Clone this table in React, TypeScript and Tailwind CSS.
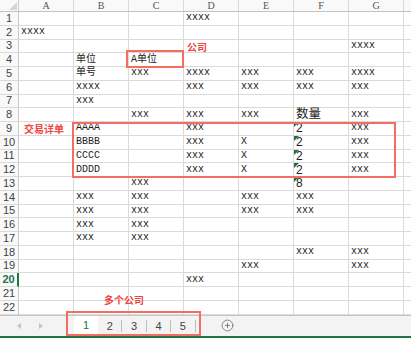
import { CirclePlus } from "lucide-react";

const cols = ["A", "B", "C", "D", "E", "F", "G"];

// row -> { colIndex: text }
const data: Record<number, Record<number, string>> = {
  1: { 3: "xxxx" },
  2: { 0: "xxxx" },
  3: { 6: "xxxx" },
  4: { 1: "单位", 2: "A单位" },
  5: { 1: "单号", 2: "xxx", 3: "xxxx", 4: "xxx", 5: "xxx", 6: "xxxx" },
  6: { 1: "xxxx", 3: "xxx", 4: "xxx", 5: "xxx", 6: "xxx" },
  7: { 1: "xxx" },
  8: { 2: "xxx", 3: "xxx", 4: "xxx", 5: "数量", 6: "xxx" },
  9: { 1: "AAAA", 3: "xxx", 5: "2", 6: "xxx" },
  10: { 1: "BBBB", 3: "xxx", 4: "X", 5: "2", 6: "xxx" },
  11: { 1: "CCCC", 3: "xxx", 4: "X", 5: "2", 6: "xxx" },
  12: { 1: "DDDD", 3: "xxx", 4: "X", 5: "2", 6: "xxx" },
  13: { 2: "xxx", 5: "8" },
  14: { 1: "xxx", 2: "xxx", 4: "xxx", 5: "xxx" },
  15: { 1: "xxx", 2: "xxx", 4: "xxx", 5: "xxx" },
  16: { 1: "xxx", 2: "xxx" },
  17: { 1: "xxx", 2: "xxx" },
  18: { 5: "xxx", 6: "xxx" },
  19: { 4: "xxx", 6: "xxx" },
  20: { 3: "xxx" },
};

const rows = Array.from({ length: 22 }, (_, i) => i + 1);
const numberCells = ["2", "8"];

function Cell({ text }: { text?: string }) {
  const isNum = text !== undefined && numberCells.includes(text);
  const isBig = text === "数量";
  return (
    <div className="relative flex items-center overflow-visible border-r border-b border-[#dadada] pl-[2px] whitespace-nowrap">
      {isNum && (
        <span className="absolute left-0 top-0 h-0 w-0 border-t-[5px] border-r-[5px] border-t-[#1e7145] border-r-transparent" />
      )}
      {text && (
        <span
          className={
            isNum
              ? "font-['Liberation_Sans',sans-serif] text-[12px] leading-none text-[#222]"
              : isBig
              ? "-mt-[2px] font-['Noto_Sans_CJK_SC',sans-serif] text-[12.5px] leading-none text-[#222]"
              : "font-['Liberation_Mono','Noto_Sans_CJK_SC',monospace] text-[10px] leading-none text-[#222]"
          }
        >
          {text}
        </span>
      )}
    </div>
  );
}

export default function App() {
  return (
    <div className="relative h-[338px] w-[411px] overflow-hidden bg-white">
      {/* column headers */}
      <div className="grid h-[12px] grid-cols-[19px_repeat(7,55px)_1fr] border-b border-[#c2c2c2] bg-[#f9f9f9]">
        <div className="relative border-r border-[#c8c8c8]">
          <span className="absolute bottom-[1px] right-[1px] h-0 w-0 border-b-[8px] border-l-[8px] border-b-[#d6d6d6] border-l-transparent" />
        </div>
        {cols.map((c) => (
          <div
            key={c}
            className="flex items-center justify-center border-r border-[#dadada] font-['Liberation_Serif',serif] text-[10px] leading-none text-[#555]"
          >
            {c}
          </div>
        ))}
        <div />
      </div>

      {/* rows */}
      {rows.map((r) => (
        <div key={r} className="grid h-[13.75px] grid-cols-[19px_repeat(7,55px)_1fr]">
          <div
            className={
              r === 20
                ? "flex items-center justify-center border-r-2 border-b border-r-[#217346] border-b-[#dadada] bg-[#f9f9f9] font-['Liberation_Sans',sans-serif] text-[11px] font-bold leading-none text-[#217346]"
                : "flex items-center justify-center border-r border-b border-r-[#c8c8c8] border-b-[#dadada] bg-[#f9f9f9] font-['Liberation_Sans',sans-serif] text-[11px] leading-none text-[#444]"
            }
          >
            {r}
          </div>
          {cols.map((c, i) => (
            <Cell key={c} text={data[r]?.[i]} />
          ))}
          <div className="border-b border-[#dadada]" />
        </div>
      ))}

      {/* sheet tabs */}
      <div className="flex h-[21.5px] items-stretch border-t border-[#c6c6c6] bg-[#f3f3f3] font-['Liberation_Sans',sans-serif] text-[11px]">
        <div className="flex w-[74px] items-center gap-[18px] pl-[17px] text-[#c4c4c4]">
          <svg width="4" height="6" viewBox="0 0 4 6">
            <path d="M4 0 L0 3 L4 6 Z" fill="currentColor" />
          </svg>
          <svg width="4" height="6" viewBox="0 0 4 6">
            <path d="M0 0 L4 3 L0 6 Z" fill="currentColor" />
          </svg>
        </div>
        <div className="flex w-[24px] items-center justify-center border-b-2 border-[#217346] bg-white text-[#217346]">
          1
        </div>
        {["2", "3", "4", "5"].map((t) => (
          <div key={t} className="flex w-[24.4px] items-center">
            <span className="flex-1 text-center text-[#444]">{t}</span>
            <span className="h-[12px] w-px bg-[#bcbcbc]" />
          </div>
        ))}
        <div className="flex items-center pl-[25px] text-[#666]">
          <CirclePlus size={13} strokeWidth={1.4} />
        </div>
      </div>
      <div className="h-[2px] bg-[#217346]" />

      {/* annotations */}
      <div className="absolute left-[126px] top-[50px] h-[18px] w-[58px] border-2 border-[#f46d62]" />
      <div className="absolute left-[187px] top-[40px] font-['Noto_Sans_CJK_SC',sans-serif] text-[10px] font-bold leading-[14px] text-[#f0463f]">
        公司
      </div>
      <div className="absolute left-[72px] top-[122px] h-[56px] w-[324px] border-2 border-[#f46d62]" />
      <div className="absolute left-[24px] top-[122px] font-['Noto_Sans_CJK_SC',sans-serif] text-[10px] font-bold leading-[14px] text-[#f0463f]">
        交易详单
      </div>
      <div className="absolute left-[104px] top-[293px] font-['Noto_Sans_CJK_SC',sans-serif] text-[10px] font-bold leading-[14px] text-[#f0463f]">
        多个公司
      </div>
      <div className="absolute left-[66px] top-[311px] h-[25px] w-[135px] border-2 border-[#f46d62]" />
    </div>
  );
}
